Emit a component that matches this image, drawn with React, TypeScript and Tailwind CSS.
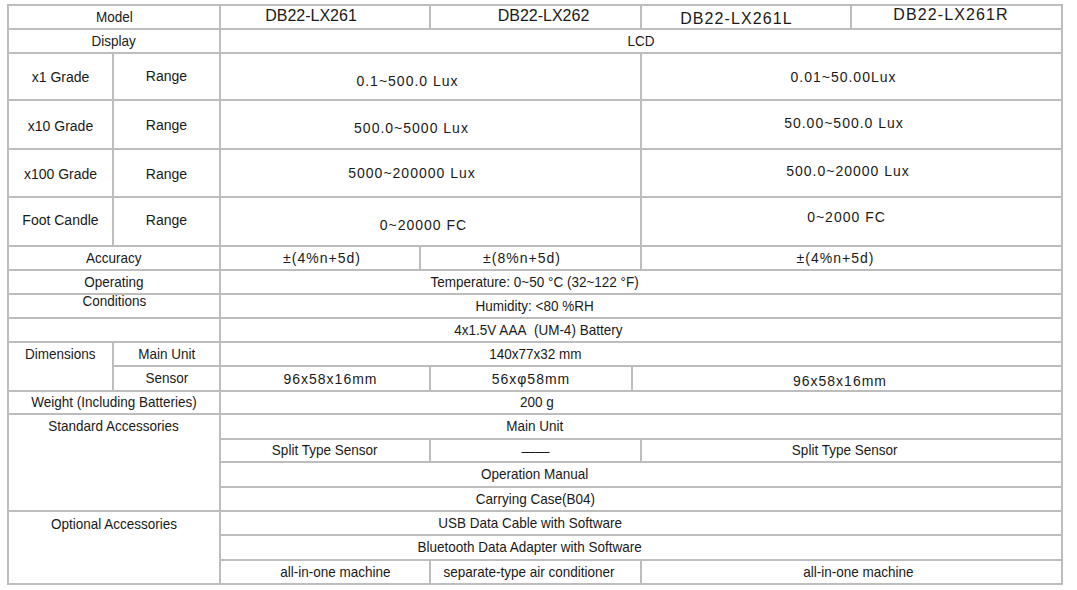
import React from "react";

// spec sheet for the DB22-LX26x light meters

type Props = { className?: string; children?: React.ReactNode };

function Row({ className = "", children }: Props) {
    return (
        <div className={`flex border-b-2 border-[#bdbdbd] ${className}`}>
            {children}
        </div>
    );
}

function Cell({ className = "", children }: Props) {
    return (
        <div
            className={`flex items-center justify-center whitespace-nowrap border-r-2 border-[#bdbdbd] ${className}`}
        >
            {children}
        </div>
    );
}

// the labels in the sheet are set in a condensed face
function N({ children }: Props) {
    return <span className="inline-block scale-x-[0.9] pb-[2px] text-[15px]">{children}</span>;
}

const num = "tracking-[1px]";

export default function App() {
    return (
        <div className="min-h-screen bg-white pt-[4px] pl-[7px] font-['Liberation_Sans',Arial,sans-serif] text-[14px] leading-none text-[#1a1a1a]">
            <div className="w-[1056px] border-l-2 border-t-2 border-[#bdbdbd]">
                {/* model row */}
                <Row className="h-[24px]">
                    <Cell className="w-[212px]"><N>Model</N></Cell>
                    <Cell className="w-[210px] pr-[28px] pb-[2px] text-[16px]">
                        DB22-LX261
                    </Cell>
                    <Cell className="w-[211px] pl-[16px] pb-[2px] text-[16px]">
                        DB22-LX262
                    </Cell>
                    <Cell className="w-[210px] pr-[19px] pt-[3px] text-[16px] tracking-[1.1px]">
                        DB22-LX261L
                    </Cell>
                    <Cell className="w-[211px] pr-[11px] pb-[4px] text-[16px] tracking-[1.1px]">
                        DB22-LX261R
                    </Cell>
                </Row>

                <Row className="h-[24px]">
                    <Cell className="w-[212px]"><N>Display</N></Cell>
                    <Cell className="w-[842px]"><N>LCD</N></Cell>
                </Row>

                {/* ranges */}
                <Row className="h-[47px]">
                    <Cell className="w-[105px]">x1 Grade</Cell>
                    <Cell className="w-[107px] pb-[2px]">Range</Cell>
                    <Cell className={`w-[421px] pr-[46px] pt-[8px] ${num}`}>
                        0.1~500.0 Lux
                    </Cell>
                    <Cell className={`w-[421px] pr-[16px] ${num}`}>
                        0.01~50.00Lux
                    </Cell>
                </Row>
                <Row className="h-[49px]">
                    <Cell className="w-[105px] pt-[2px]">x10 Grade</Cell>
                    <Cell className="w-[107px] pt-[1px]">Range</Cell>
                    <Cell className={`w-[421px] pr-[38px] pt-[7px] ${num}`}>
                        500.0~5000 Lux
                    </Cell>
                    <Cell className={`w-[421px] pr-[15px] pb-[3px] ${num}`}>
                        50.00~500.0 Lux
                    </Cell>
                </Row>
                <Row className="h-[48px]">
                    <Cell className="w-[105px] pt-[2px]">x100 Grade</Cell>
                    <Cell className="w-[107px] pt-[2px]">Range</Cell>
                    <Cell className={`w-[421px] pr-[37px] ${num}`}>
                        5000~200000 Lux
                    </Cell>
                    <Cell className={`w-[421px] pr-[7px] pb-[5px] ${num}`}>
                        500.0~20000 Lux
                    </Cell>
                </Row>
                <Row className="h-[49px]">
                    <Cell className="w-[105px] pb-[3px]">Foot Candle</Cell>
                    <Cell className="w-[107px] pb-[3px]">Range</Cell>
                    <Cell className={`w-[421px] pr-[14px] pt-[7px] ${num}`}>
                        0~20000 FC
                    </Cell>
                    <Cell className={`w-[421px] pr-[10px] pb-[9px] ${num}`}>
                        0~2000 FC
                    </Cell>
                </Row>

                <Row className="h-[24px]">
                    <Cell className="w-[212px]"><N>Accuracy</N></Cell>
                    <Cell className={`w-[200px] pl-[4px] ${num}`}>±(4%n+5d)</Cell>
                    <Cell className={`w-[221px] pr-[17px] ${num}`}>±(8%n+5d)</Cell>
                    <Cell className={`w-[421px] pr-[32px] ${num}`}>±(4%n+5d)</Cell>
                </Row>

                {/* operating conditions */}
                <Row className="h-[24px]">
                    <Cell className="w-[212px]"><N>Operating</N></Cell>
                    <Cell className="w-[842px] pr-[212px]">
                        <N>Temperature: 0~50 °C (32~122 °F)</N>
                    </Cell>
                </Row>
                <Row className="h-[24px]">
                    <Cell className="w-[212px] pb-[9px]"><N>Conditions</N></Cell>
                    <Cell className="w-[842px] pr-[212px]">
                        <N>Humidity: &lt;80 %RH</N>
                    </Cell>
                </Row>
                <Row className="h-[24px]">
                    <Cell className="w-[212px]" />
                    <Cell className="w-[842px] pr-[206px]">
                        <N>4x1.5V AAA&nbsp; (UM-4) Battery</N>
                    </Cell>
                </Row>

                {/* dimensions */}
                <div className="flex">
                    <div className="w-[105px] border-r-2 border-b-2 border-[#bdbdbd]">
                        <div className="flex h-[22px] items-center justify-center">
                            <N>Dimensions</N>
                        </div>
                    </div>
                    <div className="flex w-[949px] flex-col">
                        <Row className="h-[24px]">
                            <Cell className="w-[107px]"><N>Main Unit</N></Cell>
                            <Cell className="w-[842px] pr-[212px]">
                                <N>140x77x32 mm</N>
                            </Cell>
                        </Row>
                        <Row className="h-[25px]">
                            <Cell className="w-[107px]"><N>Sensor</N></Cell>
                            <Cell className={`w-[210px] pl-[11px] ${num}`}>
                                96x58x16mm
                            </Cell>
                            <Cell className={`w-[202px] ${num}`}>56xφ58mm</Cell>
                            <Cell className={`w-[430px] pr-[14px] pt-[5px] ${num}`}>
                                96x58x16mm
                            </Cell>
                        </Row>
                    </div>
                </div>

                <Row className="h-[23px]">
                    <Cell className="w-[212px]"><N>Weight (Including Batteries)</N></Cell>
                    <Cell className="w-[842px] pr-[208px]"><N>200 g</N></Cell>
                </Row>

                {/* standard accessories */}
                <div className="flex">
                    <div className="w-[212px] border-r-2 border-b-2 border-[#bdbdbd]">
                        <div className="flex h-[23px] items-center justify-center">
                            <N>Standard Accessories</N>
                        </div>
                    </div>
                    <div className="flex w-[842px] flex-col">
                        <Row className="h-[25px]">
                            <Cell className="w-[842px] pr-[212px]"><N>Main Unit</N></Cell>
                        </Row>
                        <Row className="h-[23px]">
                            <Cell className="w-[210px]"><N>Split Type Sensor</N></Cell>
                            <Cell className="w-[211px]">——</Cell>
                            <Cell className="w-[421px] pr-[13px]">
                                <N>Split Type Sensor</N>
                            </Cell>
                        </Row>
                        <Row className="h-[25px]">
                            <Cell className="w-[842px] pr-[212px]">
                                <N>Operation Manual</N>
                            </Cell>
                        </Row>
                        <Row className="h-[24px]">
                            <Cell className="w-[842px] pr-[212px]">
                                <N>Carrying Case(B04)</N>
                            </Cell>
                        </Row>
                    </div>
                </div>

                {/* optional accessories */}
                <div className="flex">
                    <div className="w-[212px] border-r-2 border-b-2 border-[#bdbdbd]">
                        <div className="flex h-[24px] items-center justify-center">
                            <N>Optional Accessories</N>
                        </div>
                    </div>
                    <div className="flex w-[842px] flex-col">
                        <Row className="h-[24px]">
                            <Cell className="w-[842px] pr-[222px]">
                                <N>USB Data Cable with Software</N>
                            </Cell>
                        </Row>
                        <Row className="h-[25px]">
                            <Cell className="w-[842px] pr-[222px]">
                                <N>Bluetooth Data Adapter with Software</N>
                            </Cell>
                        </Row>
                        <Row className="h-[24px]">
                            <Cell className="w-[210px] pl-[20px]">
                                <N>all-in-one machine</N>
                            </Cell>
                            <Cell className="w-[211px] pr-[12px]">
                                <N>separate-type air conditioner</N>
                            </Cell>
                            <Cell className="w-[421px] pl-[13px]">
                                <N>all-in-one machine</N>
                            </Cell>
                        </Row>
                    </div>
                </div>
            </div>
        </div>
    );
}
